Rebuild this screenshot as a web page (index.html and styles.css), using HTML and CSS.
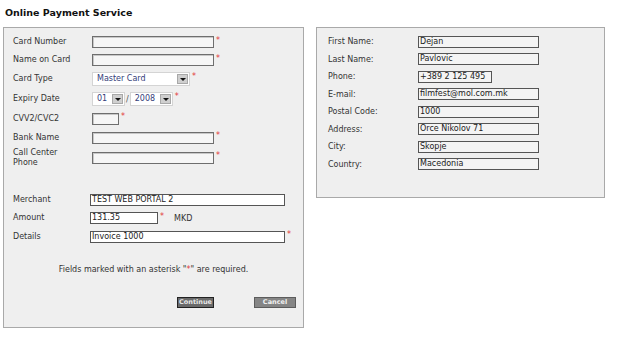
FILE: index.html
```html
<!DOCTYPE html>
<html lang="en">
<head>
  <meta charset="UTF-8">
  <meta name="viewport" content="width=device-width, initial-scale=1.0">
  <title>Online Payment Service</title>
  <link rel="stylesheet" href="styles.css">
</head>
<body>
  <div class="page">
    <h1 class="title">Online Payment Service</h1>

    <div class="panels">
      <div class="panel panel-left">
        <div class="row h18">
          <label>Card Number</label>
          <span class="field wide"></span><span class="req">*</span>
        </div>
        <div class="row h18">
          <label>Name on Card</label>
          <span class="field wide"></span><span class="req">*</span>
        </div>
        <div class="row h20">
          <label>Card Type</label>
          <span class="select card-type">Master Card<span class="arrow"></span></span><span class="req">*</span>
        </div>
        <div class="row h20">
          <label>Expiry Date</label>
          <span class="select month">01<span class="arrow"></span></span>
          <span class="slash">/</span>
          <span class="select year">2008<span class="arrow"></span></span><span class="req">*</span>
        </div>
        <div class="row h19">
          <label>CVV2/CVC2</label>
          <span class="field cvv"></span><span class="req">*</span>
        </div>
        <div class="row h20">
          <label>Bank Name</label>
          <span class="field wide"></span><span class="req">*</span>
        </div>
        <div class="row h20">
          <label>Call Center<br>Phone</label>
          <span class="field wide"></span><span class="req">*</span>
        </div>

        <div class="merchant">
          <div class="row h18">
            <label class="short">Merchant</label>
            <span class="field filled long">TEST WEB PORTAL 2</span>
          </div>
          <div class="row h18">
            <label class="short">Amount</label>
            <span class="field filled amount">131.35</span><span class="req">*</span>
            <span class="currency">MKD</span>
          </div>
          <div class="row h20">
            <label class="short">Details</label>
            <span class="field filled long">Invoice 1000</span><span class="req">*</span>
          </div>
        </div>

        <p class="notice">Fields marked with an asterisk "<span class="red">*</span>" are required.</p>

        <div class="buttons">
          <button class="btn btn-continue">Continue</button>
          <button class="btn btn-cancel">Cancel</button>
        </div>
      </div>

      <div class="panel panel-right">
        <div class="info-row"><label>First Name:</label><span class="field info">Dejan</span></div>
        <div class="info-row"><label>Last Name:</label><span class="field info">Pavlovic</span></div>
        <div class="info-row"><label>Phone:</label><span class="field info phone">+389 2 125 495</span></div>
        <div class="info-row"><label>E-mail:</label><span class="field info">filmfest@mol.com.mk</span></div>
        <div class="info-row"><label>Postal Code:</label><span class="field info">1000</span></div>
        <div class="info-row"><label>Address:</label><span class="field info">Orce Nikolov 71</span></div>
        <div class="info-row"><label>City:</label><span class="field info">Skopje</span></div>
        <div class="info-row"><label>Country:</label><span class="field info">Macedonia</span></div>
      </div>
    </div>
  </div>
</body>
</html>
```

FILE: styles.css
```css
* {
  box-sizing: border-box;
}

body {
  margin: 0;
  background: #fff;
  font-family: "DejaVu Sans", Verdana, sans-serif;
  font-size: 8px;
  color: #333;
}

.page {
  padding: 6px 3px;
}

.title {
  margin: 0 0 0 2px;
  height: 21px;
  font-size: 9.5px;
  font-weight: bold;
  color: #111;
  line-height: 14px;
}

.panels {
  display: flex;
  align-items: flex-start;
  gap: 12px;
}

.panel {
  background: #efefef;
  border: 1px solid #a9a9a9;
}

.panel-left {
  width: 301px;
  height: 301px;
  padding: 5px 0 0 9px;
}

.panel-right {
  width: 289px;
  height: 171px;
  padding: 5px 0 0 11px;
}

.row {
  display: flex;
  align-items: center;
}

.h18 { height: 18px; }
.h19 { height: 19px; }
.h20 { height: 20px; }

.row label {
  width: 79px;
  flex: none;
  line-height: 10px;
}

.row label.short {
  width: 77px;
}

.field {
  display: block;
  height: 12px;
  border: 1px solid #6e6e6e;
  background: #f6f6f6;
  box-shadow: inset 1px 1px 0 #c8c8c8;
  line-height: 10px;
  padding-left: 1px;
  color: #222;
  white-space: nowrap;
  overflow: hidden;
}

.field.wide { width: 122px; }
.field.cvv { width: 27px; }
.field.filled { background: #fff; box-shadow: none; border-color: #555; }
.field.long { width: 195px; }
.field.amount { width: 68px; }

.req {
  align-self: flex-start;
  margin: 4px 0 0 2px;
  color: #e23a3a;
  font-size: 8px;
  line-height: 8px;
}

.currency {
  margin-left: 10px;
}

.select {
  position: relative;
  display: block;
  height: 14px;
  background: #fff;
  border: 1px solid #d4d4d4;
  color: #34407a;
  line-height: 12px;
  padding-left: 4px;
}

.select.card-type { width: 98px; }
.select.month { width: 33px; }
.select.year { width: 43px; }

.arrow {
  position: absolute;
  right: 1px;
  top: 1px;
  width: 11px;
  height: 10px;
  background: #cfcfcf;
  border: 1px solid #a8a8a8;
}

.arrow:after {
  content: '';
  position: absolute;
  left: 2px;
  top: 3px;
  border-left: 3px solid transparent;
  border-right: 3px solid transparent;
  border-top: 3px solid #111;
}

.slash {
  margin: 0 1px;
  color: #555;
}

.merchant {
  margin-top: 23px;
}

.notice {
  margin: 18px 0 0 -9px;
  text-align: center;
  line-height: 10px;
  color: #333;
}

.red {
  color: #e23a3a;
}

.buttons {
  display: flex;
  margin: 22px 0 0 164px;
  gap: 40px;
}

.btn {
  height: 11px;
  padding: 0;
  font-family: "DejaVu Sans", Verdana, sans-serif;
  font-size: 6.5px;
  font-weight: bold;
  line-height: 9px;
  color: #e8e8e8;
  text-align: center;
  white-space: nowrap;
  cursor: pointer;
}

.btn-continue {
  width: 37px;
  background: #6a6a6a;
  border: 1px solid #222;
}

.btn-cancel {
  width: 42px;
  background: #858585;
  border: 1px solid #5c5c5c;
  color: #f2f2f2;
}

.info-row {
  display: flex;
  align-items: center;
  height: 17.5px;
}

.info-row label {
  width: 90px;
  flex: none;
}

.field.info {
  width: 121px;
  background: #f4f4f4;
  border-color: #555;
  box-shadow: none;
}

.field.info.phone {
  width: 74px;
}
```
